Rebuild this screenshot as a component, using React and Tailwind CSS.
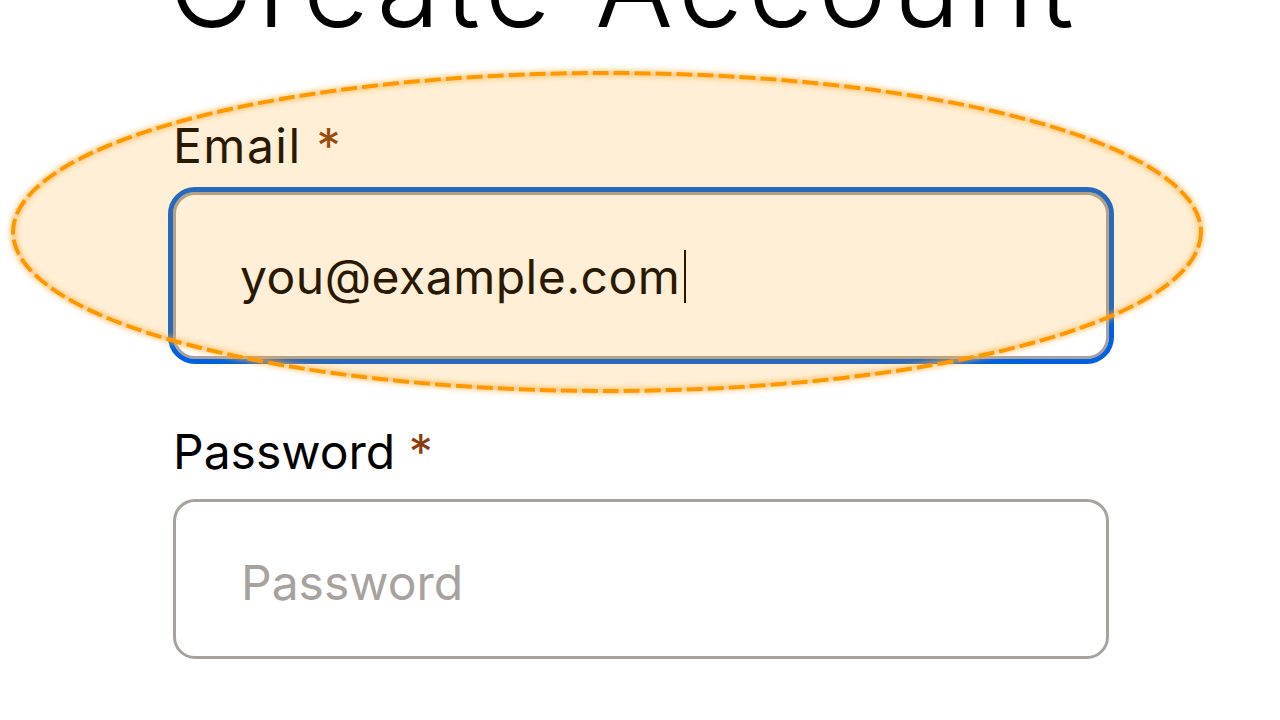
import React from "react";

function Highlight() {
  return (
    <svg
      className="pointer-events-none absolute inset-0"
      width="1280"
      height="720"
      viewBox="0 0 1280 720"
    >
      <defs>
        <filter id="glow" x="-10%" y="-10%" width="120%" height="120%">
          <feGaussianBlur stdDeviation="2.5" />
        </filter>
      </defs>
      <ellipse cx="607" cy="232" rx="594" ry="159" fill="rgba(255,153,0,0.16)" />
      <ellipse
        cx="607"
        cy="232"
        rx="594"
        ry="159"
        fill="none"
        stroke="#ffb347"
        strokeWidth="7"
        opacity="0.6"
        filter="url(#glow)"
      />
      <ellipse
        cx="607"
        cy="232"
        rx="594"
        ry="159"
        fill="none"
        stroke="#ff9800"
        strokeWidth="4"
        strokeDasharray="16 5"
      />
    </svg>
  );
}

function Label({ children, wide }) {
  return (
    <label
      className={`block text-[48px] leading-none text-black ${wide ? "tracking-[1.5px]" : "tracking-[0px]"}`}
    >
      {children} <span className="text-[#8a3c0c]">*</span>
    </label>
  );
}

export default function App() {
  return (
    <div className="relative h-[720px] w-[1280px] overflow-hidden bg-white font-['Inter',sans-serif]">
      <div className="ml-[173px] w-[936px]">
        <h1 className="-ml-[5px] -mt-[73px] text-[116px] font-light leading-none tracking-[5.3px] text-black">
          Create Account
        </h1>

        <div className="mt-[79px]">
          <Label wide>Email</Label>
          <div
            role="textbox"
            className="mt-[22px] flex h-[167px] items-center rounded-[22px] border-[3px] border-[#a8a29e] bg-white pl-[64px] pt-[2px] text-[48px] tracking-[0.5px] text-black outline-[5px] outline-[#0060df] outline-solid"
          >
            <span>you@example.com</span>
            <span className="ml-[4px] inline-block h-[53px] w-[2px] bg-black" />
          </div>
        </div>

        <div className="mt-[69px]">
          <Label>Password</Label>
          <input
            type="password"
            placeholder="Password"
            className="mt-[23px] block h-[160px] w-full rounded-[22px] border-[3px] border-[#a8a29e] bg-white pl-[65px] pt-[6px] text-[48px] text-black outline-none placeholder:text-[#a8a29e]"
          />
        </div>
      </div>
      <Highlight />
    </div>
  );
}
